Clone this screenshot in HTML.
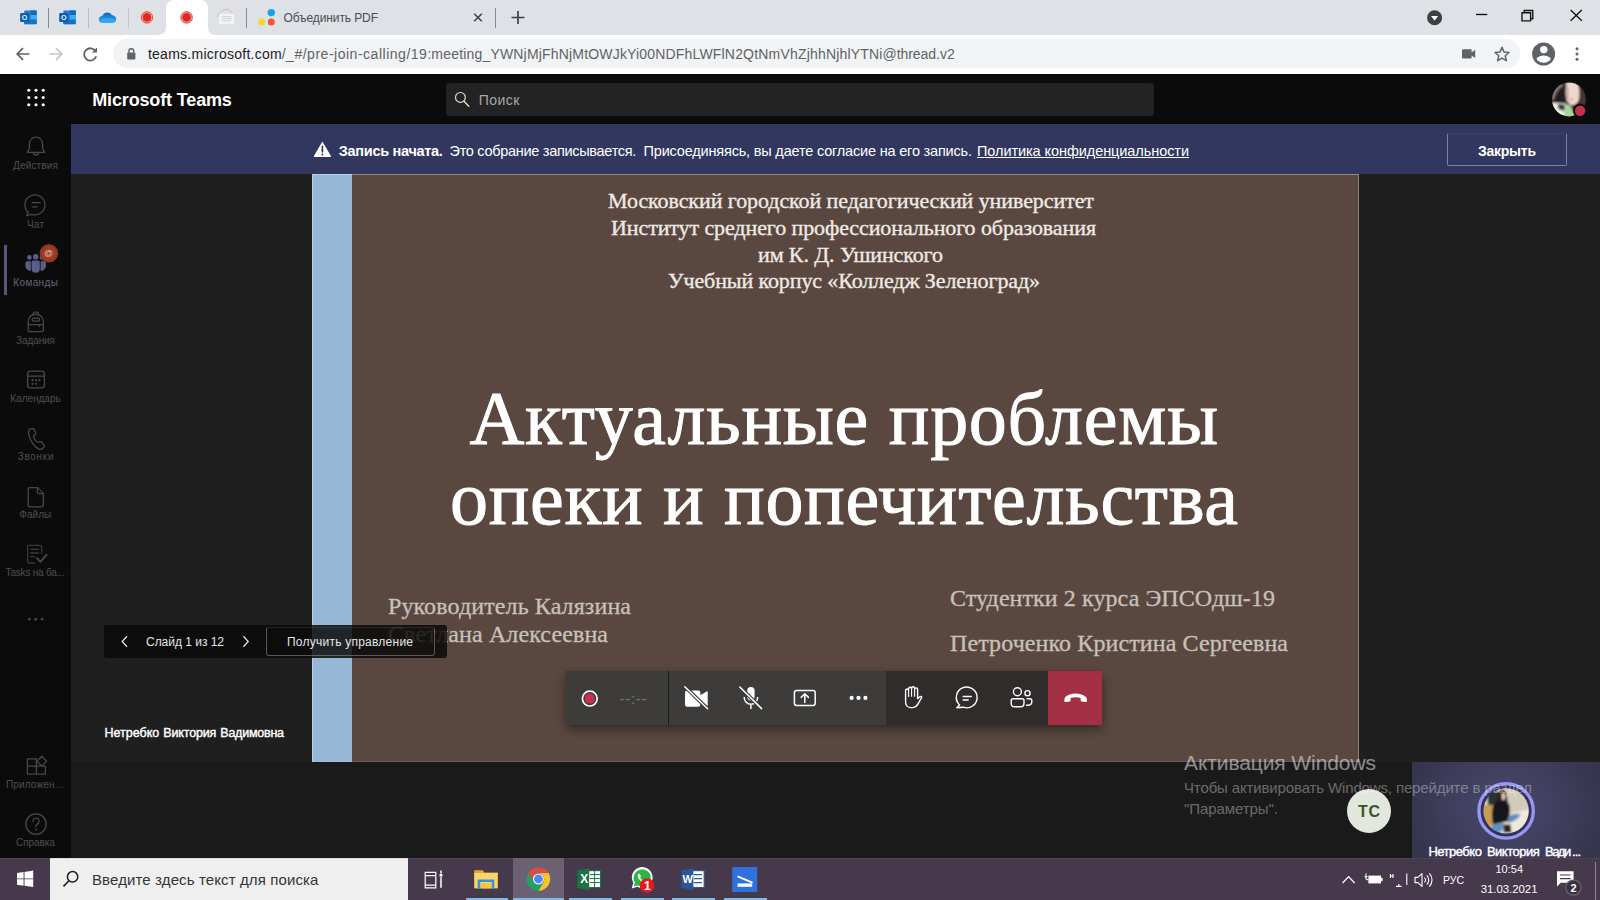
<!DOCTYPE html>
<html lang="ru">
<head>
<meta charset="utf-8">
<title>Microsoft Teams</title>
<style>
html,body{margin:0;padding:0;}
body{width:1600px;height:900px;overflow:hidden;position:relative;background:#1f1e1e;font-family:"Liberation Sans","DejaVu Sans",sans-serif;}
.abs,.t,svg.i{position:absolute;}
.t{white-space:nowrap;margin:0;padding:0;}
svg.i{overflow:visible;}
/* chrome */
#tabstrip{left:0;top:0;width:1600px;height:35px;background:#dee1e6;}
#toolbar{left:0;top:35px;width:1600px;height:39px;background:#fff;}
#acttab{left:166px;top:0;width:42px;height:35px;background:#fff;border-radius:8px 8px 0 0;}
.tsep{width:1px;height:20px;top:8px;background:#878b90;}
#omni{left:113px;top:39px;width:1407px;height:29px;border-radius:15px;background:#f1f3f4;}
/* teams */
#thead{left:0;top:74px;width:1600px;height:50px;background:#0c0b0b;}
#rail{left:0;top:124px;width:71px;height:734px;background:#0c0b0b;}
#banner{left:71px;top:124px;width:1529px;height:50px;background:#32375f;}
#stage{left:71px;top:174px;width:1529px;height:588px;background:#201f1f;}
#bottom{left:71px;top:762px;width:1529px;height:96px;background:#1b1a1a;}
#tsearch{left:446px;top:83px;width:708px;height:33px;border-radius:3px;background:#242323;}
#slideblue{left:312px;top:174px;width:40px;height:588px;background:#96b7d5;}
#slide{left:352px;top:174px;width:1007px;height:588px;background:#5a4840;}
#slideedge{left:312px;top:174px;width:1047px;height:588px;box-sizing:border-box;border-bottom:1px solid rgba(255,255,255,.10);border-top:1px solid rgba(255,255,255,.35);border-left:1px solid rgba(255,255,255,.35);border-right:1px solid rgba(255,255,255,.3);}
#closebtn{left:1447px;top:133px;width:120px;height:33px;box-sizing:border-box;border:1px solid #7c81aa;border-top-color:rgba(124,129,170,.12);border-radius:2px;}
#navbox{left:104px;top:625px;width:343px;height:33px;background:rgba(8,8,8,.84);border-radius:3px;}
#navbtn{left:266px;top:627px;width:169px;height:29px;box-sizing:border-box;border:1px solid rgba(150,150,150,.55);border-top-color:rgba(150,150,150,.18);border-radius:3px;}
/* control bar */
#cbar{left:566px;top:671px;width:536px;height:54px;box-shadow:0 4px 10px rgba(0,0,0,.45);}
#cb1{left:566px;top:671px;width:102px;height:54px;background:#3d3c3b;}
#cbd{left:668px;top:671px;width:1px;height:54px;background:#1d1c1c;}
#cb2{left:669px;top:671px;width:217px;height:54px;background:#3d3c3b;}
#cb3{left:886px;top:671px;width:162px;height:54px;background:#2f2c2b;}
#cb4{left:1048px;top:671px;width:54px;height:54px;background:#a33045;}
/* video tile */
#vtile{left:1412px;top:762px;width:188px;height:96px;background:radial-gradient(ellipse 100px 85px at 94px 46px,#49486f 0%,#414060 45%,#36354e 100%);}
#tcav{left:1347px;top:789px;width:44px;height:44px;border-radius:50%;background:#e2e7dd;}
/* taskbar */
#taskbar{left:0;top:858px;width:1600px;height:42px;background:#46394b;box-shadow:inset 0 1px 0 #4c4453;}
#tsbox{left:50px;top:858px;width:358px;height:42px;background:#efefef;border-top:1px solid #dcdcdc;box-sizing:border-box;}
#chromehl{left:513px;top:858px;width:51px;height:42px;background:#6b6173;}
.ul{top:898px;height:2px;background:#7fb9e9;}
</style>
</head>
<body>
<!-- ============ Chrome browser ============ -->
<div id="tabstrip" class="abs"></div>
<div id="toolbar" class="abs"></div>
<div id="acttab" class="abs"></div>
<div id="omni" class="abs"></div>
<div class="abs tsep" style="left:48px"></div>
<div class="abs tsep" style="left:88px;background:#b9bcc1"></div>
<div class="abs tsep" style="left:128px;background:#c4c7cc"></div>
<div class="abs tsep" style="left:246px"></div>
<div class="abs tsep" style="left:495px"></div>
<svg class="i" style="left:0;top:0" width="1600" height="74" viewBox="0 0 1600 74">
<defs>
<linearGradient id="olg" x1="0" y1="0" x2="1" y2="1"><stop offset="0" stop-color="#1a74c8"/><stop offset="1" stop-color="#2fa9ee"/></linearGradient>
<linearGradient id="odg" x1="0" y1="0" x2="0" y2="1"><stop offset="0" stop-color="#0f68c0"/><stop offset="1" stop-color="#2aa5ec"/></linearGradient>
</defs>
<!-- tab curves for active tab -->
<path d="M158 35 Q166 35 166 27 L166 35 Z" fill="#fff"/>
<path d="M216 35 Q208 35 208 27 L208 35 Z" fill="#fff"/>
<g transform="translate(20.1 10.4)">
  <rect x="4.2" y="0" width="12.4" height="13.8" rx="1" fill="url(#olg)"/>
  <rect x="10.4" y="0" width="6.2" height="4.6" fill="#1668b8"/>
  <rect x="10.4" y="4.6" width="6.2" height="4.6" fill="#35b2f2"/>
  <rect x="4.2" y="4.6" width="6.2" height="4.6" fill="#1b7fd4"/>
  <rect x="4.2" y="9.2" width="12.4" height="4.6" fill="#1a6fc2"/>
  <rect x="0" y="2.5" width="9" height="9.2" rx="1" fill="#0f5fad"/>
  <text x="4.5" y="9.700" text-anchor="middle" font-family="Liberation Sans, sans-serif" font-weight="700" font-size="7.200" fill="#dff3ff">O</text>
</g>
<g transform="translate(59.2 10.4)">
  <rect x="4.2" y="0" width="12.4" height="13.8" rx="1" fill="url(#olg)"/>
  <rect x="10.4" y="0" width="6.2" height="4.6" fill="#1668b8"/>
  <rect x="10.4" y="4.6" width="6.2" height="4.6" fill="#35b2f2"/>
  <rect x="4.2" y="4.6" width="6.2" height="4.6" fill="#1b7fd4"/>
  <rect x="4.2" y="9.2" width="12.4" height="4.6" fill="#1a6fc2"/>
  <rect x="0" y="2.5" width="9" height="9.2" rx="1" fill="#0f5fad"/>
  <text x="4.5" y="9.700" text-anchor="middle" font-family="Liberation Sans, sans-serif" font-weight="700" font-size="7.200" fill="#dff3ff">O</text>
</g>
<!-- onedrive -->
<path d="M102.5 22.8 C100 22.8 98.8 21 98.8 19.4 C98.8 17.3 100.4 16 102.2 15.9 C103 13.6 105 12.4 107.3 12.4 C109.6 12.4 111.2 13.6 112 15.2 C114.5 15.2 116.2 17 116.2 19 C116.2 21.2 114.6 22.8 112.6 22.8 Z" fill="url(#odg)"/>
<path d="M98.9 19.8 C99.2 21.6 100.6 22.8 102.5 22.8 L112.6 22.8 C114.3 22.8 115.7 21.7 116.1 20 C111 17.6 104 17.8 98.9 19.8 Z" fill="#2ea9ef"/>
<g transform="translate(147 17.4)">
  <circle r="6.3" fill="#f7b8b4"/>
  <circle r="5.6" fill="none" stroke="#d93a30" stroke-width="0.9"/>
  <circle r="4.3" fill="#dc2a22"/>
</g>
<g transform="translate(186.6 17.4)">
  <circle r="6.3" fill="#f7b8b4"/>
  <circle r="5.6" fill="none" stroke="#d93a30" stroke-width="0.9"/>
  <circle r="4.3" fill="#dc2a22"/>
</g>
<!-- faded page icon -->
<rect x="219" y="14" width="15" height="10" fill="#f4f4f5"/>
<path d="M217.5 17 C218.5 12.5 222 9.6 226 9.6 C229 9.6 231 11 232.6 13" fill="none" stroke="#e7a7ab" stroke-width="0.9"/>
<path d="M221.5 16.5h10M221.5 18.6h11M221.5 20.7h9" stroke="#c9c7c8" stroke-width="0.8"/>
<!-- dots icon -->
<circle cx="271.3" cy="12.6" r="3.7" fill="#12a4ee"/>
<circle cx="261.6" cy="22" r="3.5" fill="#fbd52b"/>
<circle cx="271.3" cy="22" r="3.5" fill="#f4582a"/>
<!-- tab close, new tab -->
<path d="M474.2 13.7l7.6 7.6M481.8 13.7l-7.6 7.6" stroke="#3c4043" stroke-width="1.5"/>
<path d="M511.5 17.5h13M518 11v13" stroke="#3c4043" stroke-width="1.7"/>
<!-- window controls -->
<circle cx="1434.6" cy="17.8" r="7.5" fill="#3c4043"/>
<path d="M1431 16h7.2l-3.6 4.4z" fill="#fff"/>
<path d="M1476 14.5h11.2" stroke="#111" stroke-width="1.35"/>
<path d="M1522 12.7h8.6v8.2h-8.6z M1524.2 12.7v-2.2h8.6v8.2h-2.2" fill="none" stroke="#111" stroke-width="1.35"/>
<path d="M1570.6 10l11.2 10.8M1581.8 10l-11.2 10.8" stroke="#111" stroke-width="1.35"/>
<!-- toolbar nav -->
<path d="M29.4 54H17.4M23 48.2L17.2 54l5.8 5.8" fill="none" stroke="#5f6368" stroke-width="1.7"/>
<path d="M49.3 54h12M56 48.2l5.8 5.8-5.8 5.8" fill="none" stroke="#c3c6c9" stroke-width="1.7"/>
<path d="M95.6 51.2A6.2 6.2 0 1 0 96.2 56.4" fill="none" stroke="#5f6368" stroke-width="1.8"/>
<path d="M97 47.4v5.2h-5.2z" fill="#5f6368"/>
<!-- lock -->
<rect x="127.2" y="52.6" width="8.2" height="7" rx="1" fill="#5f6368"/>
<path d="M128.9 52.8v-1.7a2.4 2.4 0 0 1 4.8 0v1.7" fill="none" stroke="#5f6368" stroke-width="1.4"/>
<!-- camera, star -->
<path d="M1462 50.2a1 1 0 0 1 1-1h7.6a1 1 0 0 1 1 1v2.2l3.6-2.6v8.2l-3.6-2.6v2.2a1 1 0 0 1-1 1h-7.6a1 1 0 0 1-1-1z" fill="#5f6368"/>
<path d="M1502 47.4l2 4.6 5 .45-3.8 3.3 1.15 4.9-4.35-2.6-4.35 2.6 1.15-4.9-3.8-3.3 5-.45z" fill="none" stroke="#5f6368" stroke-width="1.5" stroke-linejoin="round"/>
<!-- profile -->
<clipPath id="pfc"><circle cx="1543.600" cy="54" r="8.800"/></clipPath>
<circle cx="1543.600" cy="54" r="11.500" fill="#5f6368"/>
<circle cx="1543.800" cy="49.600" r="3.700" fill="#fff"/>
<ellipse cx="1543.700" cy="61.600" rx="8.300" ry="6" fill="#fff" clip-path="url(#pfc)"/>
<circle cx="1577" cy="48.7" r="1.5" fill="#5f6368"/><circle cx="1577" cy="54" r="1.5" fill="#5f6368"/><circle cx="1577" cy="59.3" r="1.5" fill="#5f6368"/>
</svg>


<!-- ============ Teams ============ -->
<div id="thead" class="abs"></div>
<div id="rail" class="abs"></div>
<div id="banner" class="abs"></div>
<div id="stage" class="abs"></div>
<div id="bottom" class="abs"></div>
<div id="tsearch" class="abs"></div>
<div id="slideblue" class="abs"></div>
<div id="slide" class="abs"></div>
<div id="slideedge" class="abs"></div>
<div id="s1" class="t" style="left:608px;top:188px;font:400 22px/26px 'Liberation Serif', 'DejaVu Serif', serif;color:#efeae6;letter-spacing:-0.082px;-webkit-text-stroke:0.35px #efeae6;">Московский городской педагогический университет</div>
<div id="s2" class="t" style="left:611px;top:215px;font:400 22px/26px 'Liberation Serif', 'DejaVu Serif', serif;color:#efeae6;letter-spacing:-0.095px;-webkit-text-stroke:0.35px #efeae6;">Институт среднего профессионального образования</div>
<div id="s3" class="t" style="left:758px;top:241.5px;font:400 22px/26px 'Liberation Serif', 'DejaVu Serif', serif;color:#efeae6;letter-spacing:-0.108px;-webkit-text-stroke:0.35px #efeae6;">им К. Д. Ушинского</div>
<div id="s4" class="t" style="left:668px;top:268px;font:400 22px/26px 'Liberation Serif', 'DejaVu Serif', serif;color:#efeae6;letter-spacing:-0.116px;-webkit-text-stroke:0.35px #efeae6;">Учебный корпус «Колледж Зеленоград»</div>
<div id="s5" class="t" style="left:469.5px;top:372.5px;font:400 76px/91px 'Liberation Serif', 'DejaVu Serif', serif;color:#ffffff;letter-spacing:0.709px;-webkit-text-stroke:0.95px #fff;">Актуальные проблемы</div>
<div id="s6" class="t" style="left:450px;top:452.7px;font:400 76px/91px 'Liberation Serif', 'DejaVu Serif', serif;color:#ffffff;letter-spacing:0.674px;-webkit-text-stroke:0.95px #fff;">опеки и попечительства</div>
<div id="s7" class="t" style="left:388px;top:591.5px;font:400 24px/29px 'Liberation Serif', 'DejaVu Serif', serif;color:#c8c0bb;letter-spacing:0.111px;-webkit-text-stroke:0.3px #c8c0bb;">Руководитель Калязина</div>
<div id="s8" class="t" style="left:388px;top:619.5px;font:400 24px/29px 'Liberation Serif', 'DejaVu Serif', serif;color:#c8c0bb;letter-spacing:0.113px;-webkit-text-stroke:0.3px #c8c0bb;">Светлана Алексеевна</div>
<div id="s9" class="t" style="left:950px;top:583.5px;font:400 24px/29px 'Liberation Serif', 'DejaVu Serif', serif;color:#c8c0bb;letter-spacing:0.082px;-webkit-text-stroke:0.3px #c8c0bb;">Студентки 2 курса ЭПСОдш-19</div>
<div id="s10" class="t" style="left:950px;top:628.5px;font:400 24px/29px 'Liberation Serif', 'DejaVu Serif', serif;color:#c8c0bb;letter-spacing:0.103px;-webkit-text-stroke:0.3px #c8c0bb;">Петроченко Кристина Сергеевна</div>
<div id="closebtn" class="abs"></div>
<svg class="i" style="left:0;top:74px" width="1600" height="784" viewBox="0 74 1600 784">
<!-- waffle -->
<g fill="#fff">
<circle cx="28.8" cy="90.3" r="1.55"/><circle cx="36" cy="90.3" r="1.55"/><circle cx="43.2" cy="90.3" r="1.55"/>
<circle cx="28.8" cy="97.5" r="1.55"/><circle cx="36" cy="97.5" r="1.55"/><circle cx="43.2" cy="97.5" r="1.55"/>
<circle cx="28.8" cy="104.7" r="1.55"/><circle cx="36" cy="104.7" r="1.55"/><circle cx="43.2" cy="104.7" r="1.55"/>
</g>
<!-- header search icon -->
<circle cx="460.4" cy="97.4" r="4.9" fill="none" stroke="#dcdcdc" stroke-width="1.2"/>
<path d="M464 101.2l4.800 5" stroke="#dcdcdc" stroke-width="1.400" stroke-linecap="round"/>
<!-- rail icons -->
<g fill="none" stroke="#494747" stroke-width="1.3" stroke-linecap="round" stroke-linejoin="round">
<!-- bell -->
<path d="M27.4 152.4h17.2l-2-4v-4.6a6.6 6.6 0 0 0-13.2 0v4.6z"/>
<path d="M33.4 153.2a2.7 2.7 0 0 0 5.2 0"/>
<!-- chat -->
<path d="M28.2 212.3a10 10 0 1 1 3.6 2.1l-5.2 1.3z"/>
<path d="M32.2 202.6h8M32.2 206.8h5"/>
<!-- backpack -->
<path d="M33.2 315.2v-1.6a1.4 1.4 0 0 1 1.4-1.4h2.4a1.4 1.4 0 0 1 1.4 1.4v1.6"/>
<path d="M28.2 330a1.7 1.7 0 0 0 1.7 1.7h11.8a1.7 1.7 0 0 0 1.7-1.7v-8.3a7.6 7.6 0 0 0-15.2 0z"/>
<rect x="32.2" y="318.2" width="7.4" height="3" rx="1.5"/>
<path d="M28.2 324.6h15.2M39.2 324.6v2"/>
<!-- calendar -->
<rect x="27.6" y="371.2" width="16.8" height="16.6" rx="2.6"/>
<path d="M27.6 376.2h16.8"/>
<!-- phone -->
<path d="M30 429.2l2.400-.7c.8-.2 1.600.2 1.900 1l1.300 3.300c.3.700.1 1.400-.5 1.900l-1.700 1.400c.5 2.200 2.800 5.400 4.600 6.400l2.100-.8c.7-.2 1.400 0 1.900.6l2 2.800c.4.700.4 1.500-.2 2.100l-1.400 1.400c-1 .9-2.300 1.200-3.500.6-4.800-2.300-9.400-9.600-10.400-15.500-.3-1.900.3-3.900 1.500-4.500z"/>
<!-- file -->
<path d="M29.800 487.600h7.800l5.800 5.800v11.800a1.600 1.600 0 0 1-1.600 1.600h-12a1.600 1.600 0 0 1-1.600-1.600v-16a1.600 1.600 0 0 1 1.600-1.600z"/>
<path d="M37.400 487.800v4.200a1.600 1.600 0 0 0 1.600 1.600h4.200"/>
<!-- tasks -->
<path d="M41.600 553.500v-6.600a1.500 1.500 0 0 0-1.500-1.500h-11a1.500 1.500 0 0 0-1.500 1.500v14.600a1.500 1.500 0 0 0 1.500 1.500h5.400" stroke="#3a3838"/>
<path d="M30.600 549.400h8M30.600 553h8M30.600 556.600h4" stroke="#3a3838"/>
<path d="M37 558.200l3.400 3.600 6-6.800" stroke-width="1.9"/>
<!-- apps -->
<path d="M27.400 758.800h9v15.400h-9zM27.400 766.200h18v8h-18M36.400 766.200h9v8"/>
<path d="M41.800 756.200l4.900 4.900-4.900 4.900-4.900-4.900z"/>
<!-- help -->
<circle cx="36" cy="824" r="10.200"/>
<path d="M32.900 821.200a3.100 3.100 0 1 1 4.700 2.700c-1 .7-1.600 1.300-1.600 2.600"/>
</g>
<g fill="#494747">
<circle cx="32.600" cy="380.200" r="1.100"/><circle cx="36" cy="380.200" r="1.100"/><circle cx="39.400" cy="380.200" r="1.100"/>
<circle cx="32.600" cy="383.800" r="1.100"/><circle cx="36" cy="383.800" r="1.100"/>
<circle cx="36" cy="829.400" r="1"/>
<circle cx="29.300" cy="619.200" r="1.400"/><circle cx="35.700" cy="619.200" r="1.400"/><circle cx="42.100" cy="619.200" r="1.400"/>
</g>
<!-- teams (active) -->
<rect x="4" y="245" width="3" height="50" fill="#56587c"/>
<g fill="#5a5e86">
<circle cx="29.400" cy="257.400" r="2.300"/><circle cx="35.700" cy="256.800" r="2.800"/><circle cx="42" cy="257.400" r="2.300"/>
<path d="M25.400 263c0-1 .8-1.800 1.800-1.800h3.600v9.800c-3.200 0-5.400-2.400-5.400-5.400z"/>
<path d="M46 263c0-1-.8-1.800-1.800-1.800h-3.600v9.800c3.200 0 5.400-2.400 5.400-5.400z"/>
<path d="M31.600 262.400c0-1 .8-1.800 1.800-1.800h4.600c1 0 1.800.8 1.800 1.800v6.300a4.100 4.100 0 0 1-8.200 0z"/>
</g>
<circle cx="48.900" cy="253.300" r="9.300" fill="#8a3520"/>
<circle cx="48.900" cy="253.300" r="7.500" fill="#993d27"/>
<!-- banner warning -->
<path d="M322.400 141.400l8.500 14.700a.7.700 0 0 1-.6 1h-15.800a.7.700 0 0 1-.6-1z" fill="#fff"/>
<path d="M322.400 146.400v5.400" stroke="#32375f" stroke-width="1.700" stroke-linecap="round"/>
<circle cx="322.400" cy="154.400" r="1" fill="#32375f"/>
</svg>
<div class="t" style="left:44.300px;top:247.300px;font:700 9px/12px 'Liberation Sans',sans-serif;color:#e3b4a4;">@</div>


<!-- video tile + avatars -->
<div id="vtile" class="abs"></div>
<div id="tcav" class="abs"></div>
<svg class="i" style="left:1540px;top:78px" width="60" height="44" viewBox="1540 78 60 44">
<defs><clipPath id="hav"><circle cx="1569" cy="99.400" r="17"/></clipPath>
<filter id="bl1" x="-20%" y="-20%" width="140%" height="140%"><feGaussianBlur stdDeviation="1.100"/></filter></defs>
<g clip-path="url(#hav)"><g filter="url(#bl1)">
<rect x="1548" y="78" width="44" height="44" fill="#231c22"/>
<path d="M1551 99c1-8 5-13 11-16l1 3c-5 3-8 8-9 14z" fill="#8d7876"/>
<path d="M1566.500 82h11c2 6 2.500 12 1.500 17-1 4-4 6-6.500 6s-5-2-6-6c-1-5-1-11 0-17z" fill="#f0d8cf"/>
<path d="M1567 86c1 4 1 8 .5 12" stroke="#a88478" stroke-width="1.200" fill="none"/>
<path d="M1577.500 83c6 4 9.500 12 8.500 24l-7 2c2-9 1.500-18-1.500-26z" fill="#4a3632"/>
<path d="M1568.500 98.200c1.500.8 3.500.8 5 0l-1 1.800h-3z" fill="#c47f74"/>
<path d="M1550 102.500l16 1 3 5 6 10-13 3-13-8z" fill="#eef0ea"/>
<path d="M1563 109l7-5 6 14-10 2z" fill="#a9d49c"/>
<path d="M1557.500 104l8 1-2 6-5-2z" fill="#26332a"/>
<path d="M1575 105h10v14h-7z" fill="#33261f"/>
</g></g>
<circle cx="1580.100" cy="110.700" r="7" fill="#0c0b0b"/>
<circle cx="1580.100" cy="110.700" r="5.200" fill="#c4314b"/>
</svg>
<svg class="i" style="left:1470px;top:776px" width="72" height="70" viewBox="1470 776 72 70">
<defs><clipPath id="vav"><circle cx="1506.100" cy="810.900" r="22.700"/></clipPath>
<filter id="bl2" x="-20%" y="-20%" width="140%" height="140%"><feGaussianBlur stdDeviation="0.900"/></filter></defs>
<circle cx="1506.100" cy="810.900" r="25.600" fill="#34325c"/>
<g clip-path="url(#vav)"><g filter="url(#bl2)">
<rect x="1480" y="786" width="54" height="52" fill="#d9cfbc"/>
<rect x="1509" y="786" width="26" height="28" fill="#d3ccbd"/>
<path d="M1482 805h11l1 20-11 4z" fill="#c99b52"/>
<path d="M1487 791h11v14h-10z" fill="#2c3336"/>
<path d="M1512 813l22-5v30h-38l5-9z" fill="#efe9d9"/>
<path d="M1498 792c2-3.500 7-3.500 8.500 0l1.500 12h-11z" fill="#2b2421"/>
<path d="M1501.500 793.500c1.500-1 3.500-.5 4 1.500l-.5 4.500-3 .5z" fill="#e9c6b3"/>
<path d="M1493 806c1.500-4.500 6.500-6.500 11.500-5.500 4 1 5.500 4.500 5.500 9l-1 11.500-16 3.500c-1.500-6.500-1.500-13 0-18.500z" fill="#15151b"/>
<path d="M1491 827c3.500-3.500 9-4.500 13-3l-2 7-11 5c-2.500-3-2.500-6.500 0-9z" fill="#5d90c4"/>
<path d="M1508 817.500c3.500-3.500 9-4.500 12.500-3-2 4-7.500 7.500-12.500 8.500z" fill="#5c8ec2"/>
<path d="M1503.500 824.500h7l1 8h-8z" fill="#28231f"/>
</g></g>
<circle cx="1506.100" cy="810.900" r="27.200" fill="none" stroke="#9798f2" stroke-width="3.300"/>
</svg>

<div id="vn" class="t" style="left:1428.4px;top:844.4px;font:400 13px/16px 'Liberation Sans', 'DejaVu Sans', sans-serif;color:#fff;letter-spacing:-0.496px;-webkit-text-stroke:0.4px #fff;">Нетребко</div>
<div id="vnb" class="t" style="left:1486.9px;top:844.4px;font:400 13px/16px 'Liberation Sans', 'DejaVu Sans', sans-serif;color:#fff;letter-spacing:-0.492px;-webkit-text-stroke:0.4px #fff;">Виктория</div>
<div id="vnc" class="t" style="left:1545px;top:844.4px;font:400 13px/16px 'Liberation Sans', 'DejaVu Sans', sans-serif;color:#fff;letter-spacing:-1.517px;-webkit-text-stroke:0.4px #fff;">Вади</div>
<div id="vnd" class="t" style="left:1572px;top:844.4px;font:400 13px/16px 'Liberation Sans', 'DejaVu Sans', sans-serif;color:#fff;letter-spacing:-0.922px;-webkit-text-stroke:0.4px #fff;">...</div>

<!-- slide nav -->
<div id="navbox" class="abs"></div>
<div id="navbtn" class="abs"></div>
<svg class="i" style="left:104px;top:625px" width="343" height="33" viewBox="104 625 343 33"><path d="M127 636.200l-4.800 5.300 4.800 5.300" fill="none" stroke="#e4e4e4" stroke-width="1.300"/><path d="M243.400 636.200l4.800 5.300-4.800 5.300" fill="none" stroke="#e4e4e4" stroke-width="1.300"/></svg>

<!-- control bar -->
<div id="cbar" class="abs"></div>
<div id="cb1" class="abs"></div>
<div id="cbd" class="abs"></div>
<div id="cb2" class="abs"></div>
<div id="cb3" class="abs"></div>
<div id="cb4" class="abs"></div>
<svg class="i" style="left:560px;top:665px" width="550" height="70" viewBox="560 665 550 70">
<!-- record -->
<circle cx="589.800" cy="698.600" r="7.400" fill="none" stroke="#fff" stroke-width="1.700"/>
<circle cx="589.800" cy="698.600" r="5" fill="#c9304f"/>
<!-- camera off -->
<path d="M685 692.600a2.200 2.200 0 0 1 2.200-2.200h11a2.200 2.200 0 0 1 2.200 2.200v2.600l6.200-3.800a.7.700 0 0 1 1.100.6v13.200a.7.700 0 0 1-1.100.6l-6.200-3.800v2.600a2.200 2.200 0 0 1-2.200 2.200h-11a2.200 2.200 0 0 1-2.200-2.200z" fill="#fff"/>
<path d="M685.600 687.200l21.800 21.400" stroke="#3d3c3b" stroke-width="3.600"/>
<path d="M684.800 686.800l22.800 22" stroke="#fff" stroke-width="1.500" stroke-linecap="round"/>
<!-- mic off -->
<rect x="747.200" y="687" width="7.400" height="13.400" rx="3.700" fill="#fff"/>
<path d="M744.200 697.600a6.700 6.700 0 0 0 13.400 0M750.900 704.400v4" fill="none" stroke="#fff" stroke-width="1.500" stroke-linecap="round"/>
<path d="M740.400 687.600l20.800 20.600" stroke="#3d3c3b" stroke-width="3.600"/>
<path d="M739.800 687l21.800 21.600" stroke="#fff" stroke-width="1.500" stroke-linecap="round"/>
<!-- share -->
<rect x="794.400" y="690.600" width="20.800" height="14.800" rx="2.200" fill="none" stroke="#fff" stroke-width="1.500"/>
<path d="M804.800 702.400v-8.400M801.200 697.400l3.600-3.600 3.600 3.600" fill="none" stroke="#fff" stroke-width="1.500" stroke-linecap="round" stroke-linejoin="round"/>
<!-- more -->
<circle cx="851.600" cy="697.900" r="2.100" fill="#fff"/><circle cx="858.500" cy="697.900" r="2.100" fill="#fff"/><circle cx="865.400" cy="697.900" r="2.100" fill="#fff"/>
<!-- hand -->
<path d="M905.600 700.400v-9.800a1.500 1.500 0 0 1 3-.2v-1.600a1.500 1.500 0 0 1 3-.1v-.4a1.500 1.500 0 0 1 3 0v1a1.500 1.500 0 0 1 3 .1v9.200l2.200-1.800c1-.8 2.200-.3 1.800.8l-3.400 6c-1.400 2.600-3.200 4-6.200 4h-1c-3.200 0-5.400-2.400-5.400-5.400z" fill="none" stroke="#fff" stroke-width="1.400" stroke-linejoin="round"/>
<path d="M908.600 690.400v6.600M911.600 688.800v8M914.600 689.400v7.400" stroke="#fff" stroke-width="1.100"/>
<!-- chat -->
<path d="M959.600 705a10.400 10.400 0 1 1 3.600 2.200l-6.400.6z" fill="none" stroke="#fff" stroke-width="1.400" stroke-linejoin="round"/>
<path d="M963.200 696.400h8M963.200 700h5" stroke="#fff" stroke-width="1.500" stroke-linecap="round"/>
<!-- people -->
<circle cx="1017.400" cy="691.700" r="4" fill="none" stroke="#fff" stroke-width="1.400"/>
<path d="M1011.200 700.600a1.800 1.800 0 0 1 1.800-1.800h9.200a1.800 1.800 0 0 1 1.800 1.800v2.600c0 2.400-1.800 3.600-3.600 3.600h-5.600c-1.800 0-3.600-1.200-3.600-3.600z" fill="none" stroke="#fff" stroke-width="1.400"/>
<circle cx="1027.500" cy="693.200" r="2.600" fill="none" stroke="#fff" stroke-width="1.400"/>
<path d="M1027 698.800h3.200a1.600 1.600 0 0 1 1.600 1.600v1.400c0 2-1.600 3.400-3.600 3.400h-1.600" fill="none" stroke="#fff" stroke-width="1.400" stroke-linecap="round"/>
<!-- hang up -->
<path d="M1064.400 699.600c0-1 .2-1.800.9-2.500 2.400-2.200 6.100-3.500 10.300-3.500s7.900 1.300 10.300 3.500c.7.700.9 1.500.9 2.500v1.300c0 .8-.6 1.300-1.400 1.200l-3.700-.6c-.7-.1-1.100-.6-1.100-1.300v-2.100c-1.500-.6-3.200-.9-5-.9s-3.500.3-5 .9v2.100c0 .7-.4 1.200-1.100 1.300l-3.700.6c-.8.100-1.400-.4-1.400-1.200z" fill="#fff"/>
</svg>


<!-- ============ Windows taskbar ============ -->
<div id="taskbar" class="abs"></div>
<div id="tsbox" class="abs"></div>
<div id="chromehl" class="abs"></div>
<div class="abs ul" style="left:466px;width:42px"></div>
<div class="abs ul" style="left:513px;width:51px"></div>
<div class="abs ul" style="left:569px;width:43px"></div>
<div class="abs ul" style="left:621px;width:43px"></div>
<div class="abs ul" style="left:672px;width:43px"></div>
<div class="abs ul" style="left:724px;width:43px"></div>
<svg class="i" style="left:0;top:858px" width="1600" height="42" viewBox="0 858 1600 42">
<!-- windows logo -->
<path d="M17 872.900l6.600-.9v6.400H17zM24.500 871.900l8.700-1.300v7.800h-8.700zM17 879.300h6.600v6.400l-6.600-.9zM24.500 879.300h8.700v7.800l-8.700-1.300z" fill="#fff"/>
<!-- search icon -->
<circle cx="72.600" cy="876.800" r="5.200" fill="none" stroke="#1e1e1e" stroke-width="1.500"/>
<path d="M68.900 880.800l-5.400 5.600" stroke="#1e1e1e" stroke-width="1.600"/>
<!-- task view -->
<path d="M425.200 872.400h10.600v3.200h-10.600zM425.200 875.600v9.600h10.600v-9.600M425.200 885.200h10.600v2.600h-10.600z" fill="none" stroke="#fff" stroke-width="1.200"/>
<path d="M441 870.400v3.200M441 877.200v10.600" stroke="#fff" stroke-width="1.500"/>
<rect x="439.600" y="874" width="2.800" height="2.600" fill="#fff"/>
<!-- file explorer -->
<path d="M474.200 870.200h8.600l1.600 2.200h13.400v3h-23.600z" fill="#e3a92b"/>
<rect x="474.200" y="873" width="23.600" height="15.400" fill="#f9d468"/>
<path d="M479 888.400v-7.600h14v7.600" fill="none" stroke="#3f8fd4" stroke-width="2.600"/>
<rect x="481" y="883.200" width="10" height="5.200" fill="#f3c84a"/>
<!-- chrome -->
<g transform="translate(538.4 879)">
<path id="chp" d="M-10.219 -5.9A11.8 11.8 0 0 1 10.219 -5.9L0 -5.9A5.9 5.9 0 0 0 -5.11 2.95Z" fill="#dd4b3e"/>
<path d="M-10.219 -5.9A11.8 11.8 0 0 1 10.219 -5.9L0 -5.9A5.9 5.9 0 0 0 -5.11 2.95Z" fill="#f6c529" transform="rotate(120)"/>
<path d="M-10.219 -5.9A11.8 11.8 0 0 1 10.219 -5.9L0 -5.9A5.9 5.9 0 0 0 -5.11 2.95Z" fill="#1ea362" transform="rotate(240)"/>
<circle r="5.5" fill="#f4f4f4"/>
<circle r="4.4" fill="#4a8af4"/>
</g>
<!-- excel -->
<rect x="587" y="870.600" width="13.600" height="17" fill="#fff" stroke="#1e7145" stroke-width="1.200"/>
<path d="M590 874.600h10M590 878.600h10M590 882.600h10M594.600 871v16.400" stroke="#1e7145" stroke-width="1"/>
<path d="M577.200 870.200l12-2v21.800l-12-2z" fill="#1e7145"/>
<!-- whatsapp -->
<path d="M631.600 888.400l1.700-5.600a10.400 10.400 0 1 1 4.100 3.900z" fill="#fff"/>
<path d="M633.800 886.200l1.100-3.800a8.600 8.600 0 1 1 3.100 3z" fill="#2bb741"/>
<path d="M638.600 873.800c-.5.500-1.200 1.400-.9 2.600.7 2.600 3.400 5.400 6.200 6.200 1 .3 2-.3 2.600-1 .3-.4.200-.9-.1-1.100l-1.700-1c-.4-.2-.8-.1-1 .2l-.5.700c-1.300-.5-2.600-1.800-3.200-3.100l.7-.6c.3-.3.300-.7.100-1l-1.100-1.700c-.3-.4-.8-.5-1.100-.2z" fill="#fff"/>
<circle cx="647" cy="885.600" r="7.300" fill="#e8171d"/>
<!-- word -->
<rect x="691.600" y="870.600" width="12.600" height="17" fill="#fff" stroke="#2b579a" stroke-width="1.200"/>
<path d="M694 874.600h8M694 878.600h8M694 882.600h8" stroke="#2b579a" stroke-width="1.400"/>
<path d="M681.400 870.200l12-2v21.800l-12-2z" fill="#2b579a"/>
<!-- scan app -->
<rect x="732.200" y="867" width="25" height="25" fill="#2f72de"/>
<path d="M738.200 876.600l13.600 5.800" stroke="#fff" stroke-width="1.800" stroke-linecap="round"/>
<path d="M737.600 883.400h14.600v3.400h-14.600z" fill="#fff"/>
<!-- tray -->
<path d="M1342.600 883l6-6.400 6 6.400" fill="none" stroke="#fff" stroke-width="1.300"/>
<rect x="1368.400" y="875.600" width="12.600" height="7.800" fill="#fff"/>
<rect x="1381" y="877.800" width="1.600" height="3.400" fill="#fff"/>
<path d="M1366 873.600v4.600M1364.400 876.800h3.200M1366 878.200c0 1 .8 1.600 2.400 1.600" fill="none" stroke="#fff" stroke-width="1.100"/>
<path d="M1390.400 874v4M1393 874v4M1390.400 876h2.600M1396 886.400h5.600M1398.800 884v2.400M1406.800 873.400v11.600" stroke="#fff" stroke-width="1.100"/>
<path d="M1415 877.400h3l4-3.800v12.800l-4-3.800h-3z" fill="none" stroke="#fff" stroke-width="1.100" stroke-linejoin="round"/>
<path d="M1424.400 877.600a3.400 3.400 0 0 1 0 4.800M1426.800 875.400a6.400 6.400 0 0 1 0 9.200M1429.300 873.400a9.300 9.300 0 0 1 0 13.200" fill="none" stroke="#fff" stroke-width="1.100"/>
<!-- notifications -->
<path d="M1557 871.200h16.600v11.600h-12.800l-3.800 3.800z" fill="#fff"/>
<path d="M1560 875h10.600M1560 878.600h10.600" stroke="#46394b" stroke-width="1.100"/>
<circle cx="1573.400" cy="887.600" r="7.600" fill="#3a3040" stroke="#6d6474" stroke-width="1.200"/>
<path d="M1595.500 862v38" stroke="#8c8592" stroke-width="1"/>
</svg>
<div class="t" style="left:580.300px;top:871.500px;font:700 12px/15px 'Liberation Sans',sans-serif;color:#fff;">X</div>
<div class="t" style="left:682.400px;top:871.700px;font:700 11px/15px 'Liberation Sans',sans-serif;color:#fff;letter-spacing:-0.500px;">W</div>
<div class="t" style="left:644px;top:878.600px;font:700 12px/14px 'Liberation Sans',sans-serif;color:#fff;">1</div>
<div class="t" style="left:1570.400px;top:881px;font:700 11px/14px 'Liberation Sans',sans-serif;color:#fff;">2</div>


<!-- ============ Text ============ -->
<div id="tabt" class="t" style="left:283.5px;top:10.5px;font:400 12px/14px 'Liberation Sans', 'DejaVu Sans', sans-serif;color:#4a4d51;letter-spacing:-0.103px;">Объединить PDF</div>
<div id="u1" class="t" style="left:147.9px;top:45.5px;font:400 14px/17px 'Liberation Sans', 'DejaVu Sans', sans-serif;color:#202124;letter-spacing:0.259px;">teams.microsoft.com</div>
<div id="u2" class="t" style="left:281.7px;top:45.5px;font:400 14px/17px 'Liberation Sans', 'DejaVu Sans', sans-serif;color:#5f6368;letter-spacing:0.515px;">/_#/pre-join-calling/19:</div>
<div id="u3" class="t" style="left:431.3px;top:45.5px;font:400 14px/17px 'Liberation Sans', 'DejaVu Sans', sans-serif;color:#5f6368;letter-spacing:0.215px;">meeting_</div>
<div id="u4" class="t" style="left:490.4px;top:45.5px;font:400 14px/17px 'Liberation Sans', 'DejaVu Sans', sans-serif;color:#5f6368;letter-spacing:0.183px;">YWNjMjFhNjMtOWJkYi</div>
<div id="u5" class="t" style="left:639.2px;top:45.5px;font:400 14px/17px 'Liberation Sans', 'DejaVu Sans', sans-serif;color:#5f6368;letter-spacing:0.190px;">00NDFhLWFlN2QtNmVhZjhhNjhlYTNi</div>
<div id="u6" class="t" style="left:882.5px;top:45.5px;font:400 14px/17px 'Liberation Sans', 'DejaVu Sans', sans-serif;color:#5f6368;letter-spacing:-0.044px;">@thread.v2</div>
<div id="mst" class="t" style="left:92.2px;top:89px;font:700 18px/22px 'Liberation Sans', 'DejaVu Sans', sans-serif;color:#fff;letter-spacing:-0.143px;">Microsoft Teams</div>
<div id="srch" class="t" style="left:478.75px;top:91.7px;font:400 14px/17px 'Liberation Sans', 'DejaVu Sans', sans-serif;color:#a8a8a8;letter-spacing:0.463px;">Поиск</div>
<div id="r1" class="t" style="left:13px;top:159.5px;font:400 10px/12px 'Liberation Sans', 'DejaVu Sans', sans-serif;color:#504e4e;letter-spacing:0.167px;">Действия</div>
<div id="r2" class="t" style="left:27px;top:218.5px;font:400 10px/12px 'Liberation Sans', 'DejaVu Sans', sans-serif;color:#504e4e;letter-spacing:0.203px;">Чат</div>
<div id="r3" class="t" style="left:13.3px;top:276.5px;font:400 10px/12px 'Liberation Sans', 'DejaVu Sans', sans-serif;color:#65657c;letter-spacing:0.371px;">Команды</div>
<div id="r4" class="t" style="left:16px;top:334.5px;font:400 10px/12px 'Liberation Sans', 'DejaVu Sans', sans-serif;color:#504e4e;letter-spacing:-0.089px;">Задания</div>
<div id="r5" class="t" style="left:10.3px;top:392.7px;font:400 10px/12px 'Liberation Sans', 'DejaVu Sans', sans-serif;color:#504e4e;letter-spacing:-0.011px;">Календарь</div>
<div id="r6" class="t" style="left:17.7px;top:451.2px;font:400 10px/12px 'Liberation Sans', 'DejaVu Sans', sans-serif;color:#504e4e;letter-spacing:0.701px;">Звонки</div>
<div id="r7" class="t" style="left:19.3px;top:508.8px;font:400 10px/12px 'Liberation Sans', 'DejaVu Sans', sans-serif;color:#504e4e;letter-spacing:0.055px;">Файлы</div>
<div id="r8" class="t" style="left:5.6px;top:567px;font:400 10px/12px 'Liberation Sans', 'DejaVu Sans', sans-serif;color:#504e4e;letter-spacing:-0.193px;">Tasks на ба...</div>
<div id="r9" class="t" style="left:6px;top:779px;font:400 10px/12px 'Liberation Sans', 'DejaVu Sans', sans-serif;color:#504e4e;letter-spacing:0.146px;">Приложен...</div>
<div id="r10" class="t" style="left:16px;top:837.3px;font:400 10px/12px 'Liberation Sans', 'DejaVu Sans', sans-serif;color:#504e4e;letter-spacing:-0.089px;">Справка</div>
<div id="b1" class="t" style="left:338.8px;top:142.5px;font:700 14.5px/17px 'Liberation Sans', 'DejaVu Sans', sans-serif;color:#fff;letter-spacing:-0.298px;">Запись начата.</div>
<div id="b2" class="t" style="left:449.5px;top:142.5px;font:400 14.5px/17px 'Liberation Sans', 'DejaVu Sans', sans-serif;color:#fff;letter-spacing:-0.294px;">Это собрание записывается.</div>
<div id="b2b" class="t" style="left:643.6px;top:142.5px;font:400 14.5px/17px 'Liberation Sans', 'DejaVu Sans', sans-serif;color:#fff;letter-spacing:-0.185px;">Присоединяясь, вы даете согласие на его запись.</div>
<div id="b3" class="t" style="left:977px;top:142.5px;font:400 14.5px/17px 'Liberation Sans', 'DejaVu Sans', sans-serif;color:#fff;letter-spacing:-0.074px;text-decoration:underline;">Политика конфиденциальности</div>
<div id="b4" class="t" style="left:1478px;top:142.5px;font:700 14px/17px 'Liberation Sans', 'DejaVu Sans', sans-serif;color:#fff;letter-spacing:-0.258px;">Закрыть</div>
<div id="n1" class="t" style="left:146px;top:634.5px;font:400 12px/14px 'Liberation Sans', 'DejaVu Sans', sans-serif;color:#e6e6e6;letter-spacing:-0.023px;">Слайд 1 из 12</div>
<div id="n2" class="t" style="left:287px;top:635px;font:400 12px/14px 'Liberation Sans', 'DejaVu Sans', sans-serif;color:#e6e6e6;letter-spacing:0.239px;">Получить управление</div>
<div id="n3" class="t" style="left:104.4px;top:725.5px;font:400 12.5px/15px 'Liberation Sans', 'DejaVu Sans', sans-serif;color:#fff;letter-spacing:0.017px;-webkit-text-stroke:0.4px #fff;">Нетребко</div>
<div id="n3b" class="t" style="left:163.2px;top:725.5px;font:400 12.5px/15px 'Liberation Sans', 'DejaVu Sans', sans-serif;color:#fff;letter-spacing:-0.139px;-webkit-text-stroke:0.4px #fff;">Виктория</div>
<div id="n3c" class="t" style="left:220.3px;top:725.5px;font:400 12.5px/15px 'Liberation Sans', 'DejaVu Sans', sans-serif;color:#fff;letter-spacing:-0.239px;-webkit-text-stroke:0.4px #fff;">Вадимовна</div>
<div id="c1" class="t" style="left:619.5px;top:690px;font:400 15px/18px 'Liberation Sans', 'DejaVu Sans', sans-serif;color:#7a7978;letter-spacing:0.736px;">--:--</div>
<div id="a1" class="t" style="left:1184px;top:749.8px;font:400 21px/25px 'Liberation Sans', 'DejaVu Sans', sans-serif;color:rgba(255,255,255,.5);letter-spacing:-0.097px;">Активация Windows</div>
<div id="a2" class="t" style="left:1184px;top:779px;font:400 15px/18px 'Liberation Sans', 'DejaVu Sans', sans-serif;color:rgba(255,255,255,.36);letter-spacing:-0.138px;">Чтобы активировать Windows, перейдите в раздел</div>
<div id="a3" class="t" style="left:1184px;top:799.5px;font:400 15px/18px 'Liberation Sans', 'DejaVu Sans', sans-serif;color:rgba(255,255,255,.36);letter-spacing:-0.071px;">"Параметры".</div>
<div id="tc" class="t" style="left:1358px;top:801.5px;font:700 16px/19px 'Liberation Sans', 'DejaVu Sans', sans-serif;color:#3e5232;letter-spacing:0.672px;">TC</div>
<div id="k1" class="t" style="left:92px;top:871px;font:400 15px/18px 'Liberation Sans', 'DejaVu Sans', sans-serif;color:#353535;letter-spacing:0.118px;">Введите здесь текст для поиска</div>
<div id="k2" class="t" style="left:1443px;top:873.5px;font:400 10.5px/13px 'Liberation Sans', 'DejaVu Sans', sans-serif;color:#fff;letter-spacing:-0.016px;">РУС</div>
<div id="k3" class="t" style="left:1495.5px;top:863px;font:400 11px/13px 'Liberation Sans', 'DejaVu Sans', sans-serif;color:#fff;letter-spacing:-0.008px;">10:54</div>
<div id="k4" class="t" style="left:1480.7px;top:881.5px;font:400 11.4px/14px 'Liberation Sans', 'DejaVu Sans', sans-serif;color:#fff;letter-spacing:-0.024px;">31.03.2021</div>
</body>
</html>
